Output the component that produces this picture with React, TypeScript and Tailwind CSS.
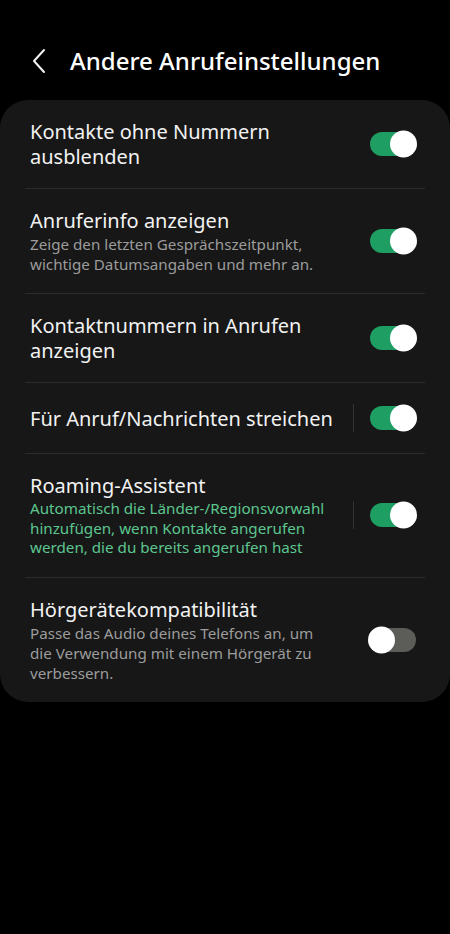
import { ReactNode } from "react";

interface Setting {
  title: string;
  subtitle?: string;
  accent?: boolean;
  on: boolean;
  divider?: boolean;
  minH?: string;
}

const settings: Setting[] = [
  { title: "Kontakte ohne Nummern ausblenden", on: true },
  {
    title: "Anruferinfo anzeigen",
    subtitle: "Zeige den letzten Gesprächszeitpunkt, wichtige Datumsangaben und mehr an.",
    on: true,
  },
  { title: "Kontaktnummern in Anrufen anzeigen", on: true },
  { title: "Für Anruf/Nachrichten streichen", on: true, divider: true, minH: "min-h-[70px]" },
  {
    title: "Roaming-Assistent",
    subtitle:
      "Automatisch die Länder-/Regionsvorwahl hinzufügen, wenn Kontakte angerufen werden, die du bereits angerufen hast",
    accent: true,
    on: true,
    divider: true,
  },
  {
    title: "Hörgerätekompatibilität",
    subtitle: "Passe das Audio deines Telefons an, um die Verwendung mit einem Hörgerät zu verbessern.",
    on: false,
  },
];

function Toggle({ on }: { on: boolean }) {
  return (
    <div
      className={`relative shrink-0 w-[46px] h-[24px] rounded-full ${on ? "bg-[#1e9e63]" : "bg-[#5c5c58]"}`}
    >
      <div
        className={`absolute top-1/2 -translate-y-1/2 w-[27px] h-[27px] rounded-full bg-white ${
          on ? "right-[-1px]" : "left-[-2px]"
        }`}
      />
    </div>
  );
}

function Row({ s, last }: { s: Setting; last: boolean }): ReactNode {
  return (
    <div>
      <div className={`flex items-center pl-[30px] pr-[34px] py-[19px] ${s.minH ?? ""}`}>
        <div className="w-[312px] shrink-0">
          <div className="text-[20px] leading-[25px] text-[#f2f2f2]">{s.title}</div>
          {s.subtitle && (
            <div
              className={`mt-[1px] w-[305px] text-[15.2px] ${
                s.accent ? "text-[#5cc68f] leading-[19.5px]" : "text-[#9c9c9c] leading-[20px]"
              }`}
            >
              {s.subtitle}
            </div>
          )}
        </div>
        <div className="flex-1" />
        {s.divider && <div className="w-px h-[28px] bg-[#333333] mr-[16px]" />}
        <Toggle on={s.on} />
      </div>
      {!last && <div className="mx-[25px] h-px bg-[#2c2c2c]" />}
    </div>
  );
}

export default function App() {
  return (
    <div
      className="min-h-[934px] w-[450px] bg-black"
      style={{ fontFamily: "'Noto Sans', Roboto, sans-serif" }}
    >
      <div className="pt-[39px] pb-[17px]">
        <div className="flex items-center h-[44px]">
          <svg
            className="ml-[31px]"
            width="16"
            height="26"
            viewBox="0 0 16 26"
            fill="none"
            stroke="#f2f2f2"
            strokeWidth="2"
            strokeLinecap="round"
            strokeLinejoin="round"
          >
            <path d="M13 2 L3 13 L13 24" />
          </svg>
          <span className="ml-[23px] text-[24px] font-medium text-white">
            Andere Anrufeinstellungen
          </span>
        </div>
      </div>
      <div className="bg-[#171717] rounded-[28px]">
        {settings.map((s, i) => (
          <Row key={s.title} s={s} last={i === settings.length - 1} />
        ))}
      </div>
    </div>
  );
}
